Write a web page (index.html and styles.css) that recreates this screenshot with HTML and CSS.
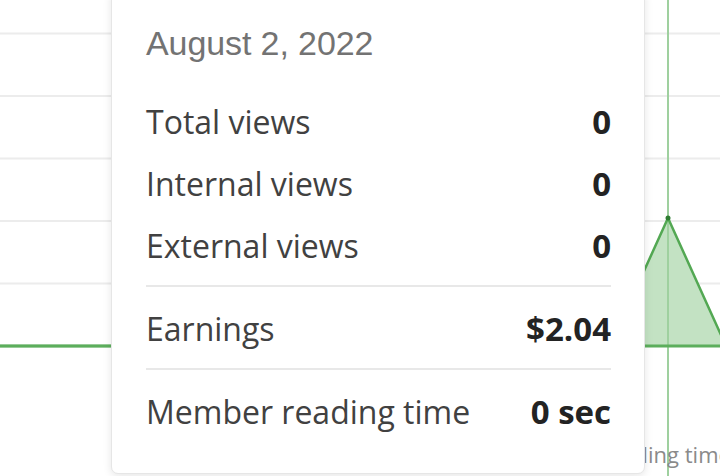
FILE: index.html
```html
<!DOCTYPE html>
<html lang="en">
<head>
<meta charset="utf-8">
<title>Stats tooltip</title>
<link rel="stylesheet" href="styles.css">
</head>
<body>
<div class="stage">
  <svg class="chart" width="720" height="476" viewBox="0 0 720 476" xmlns="http://www.w3.org/2000/svg">
    <g class="grid">
      <line x1="0" y1="33.5" x2="720" y2="33.5"/>
      <line x1="0" y1="96" x2="720" y2="96"/>
      <line x1="0" y1="158.5" x2="720" y2="158.5"/>
      <line x1="0" y1="221" x2="720" y2="221"/>
      <line x1="0" y1="283.5" x2="720" y2="283.5"/>
    </g>
    <polygon class="area" points="610,346 668,218 726,346"/>
    <line class="cursor" x1="668" y1="0" x2="668" y2="476"/>
    <polyline class="series" points="0,346 610,346 668,218 726,346"/>
    <line class="zero" x1="0" y1="346" x2="720" y2="346"/>
    <circle class="dot" cx="668" cy="218" r="2.5"/>
    <text class="axis-label" x="508" y="463">Member reading time</text>
  </svg>

  <div class="tooltip">
    <div class="tooltip-date">August 2, 2022</div>
    <div class="stat-group">
      <div class="stat-row"><span class="stat-label">Total views</span><span class="stat-value">0</span></div>
      <div class="stat-row"><span class="stat-label">Internal views</span><span class="stat-value">0</span></div>
      <div class="stat-row"><span class="stat-label">External views</span><span class="stat-value">0</span></div>
    </div>
    <div class="stat-group divided">
      <div class="stat-row"><span class="stat-label">Earnings</span><span class="stat-value">$2.04</span></div>
    </div>
    <div class="stat-group divided">
      <div class="stat-row"><span class="stat-label">Member reading time</span><span class="stat-value">0 sec</span></div>
    </div>
  </div>
</div>
</body>
</html>
```
FILE: styles.css
```css
html, body {
  margin: 0;
  padding: 0;
  background: #ffffff;
}

.stage {
  position: relative;
  width: 720px;
  height: 476px;
  overflow: hidden;
  background: #ffffff;
}

.chart {
  position: absolute;
  left: 0;
  top: 0;
  display: block;
}

.grid line {
  stroke: #ececec;
  stroke-width: 2;
}

.area {
  fill: #c3e2c3;
  stroke: none;
}

.cursor {
  stroke: #9fd09f;
  stroke-width: 2;
}

.series {
  fill: none;
  stroke: #53a853;
  stroke-width: 2.5;
  stroke-linejoin: round;
}

.zero {
  stroke: #5cae5c;
  stroke-width: 3;
}

.dot {
  fill: #2f7d32;
}

.axis-label {
  font-family: "Open Sans", "Noto Sans", sans-serif;
  font-size: 22px;
  fill: #8a8a8a;
}

.tooltip {
  position: absolute;
  left: 111px;
  top: -10px;
  width: 534px;
  box-sizing: border-box;
  padding: 31.6px 33px 30px 34px;
  background: #ffffff;
  border: 1px solid #e6e6e6;
  border-radius: 7px;
  box-shadow: 0 2px 8px rgba(0, 0, 0, 0.10);
  display: flex;
  flex-direction: column;
}

.tooltip-date {
  font-family: "Liberation Sans", Arial, sans-serif;
  font-size: 34px;
  line-height: 40px;
  color: #737373;
  letter-spacing: -0.1px;
  margin-bottom: 28px;
  white-space: nowrap;
}

.stat-group {
  display: flex;
  flex-direction: column;
}

.stat-group.divided {
  margin-top: 8px;
  padding-top: 11px;
  border-top: 2px solid #e8e8e8;
}

.stat-row {
  display: flex;
  justify-content: space-between;
  align-items: baseline;
  height: 62px;
  line-height: 62px;
  font-family: "Open Sans", "Noto Sans", sans-serif;
  white-space: nowrap;
}

.stat-label {
  font-size: 32px;
  color: #414141;
}

.stat-value {
  font-size: 33px;
  color: #232323;
  font-weight: 700;
}
```
